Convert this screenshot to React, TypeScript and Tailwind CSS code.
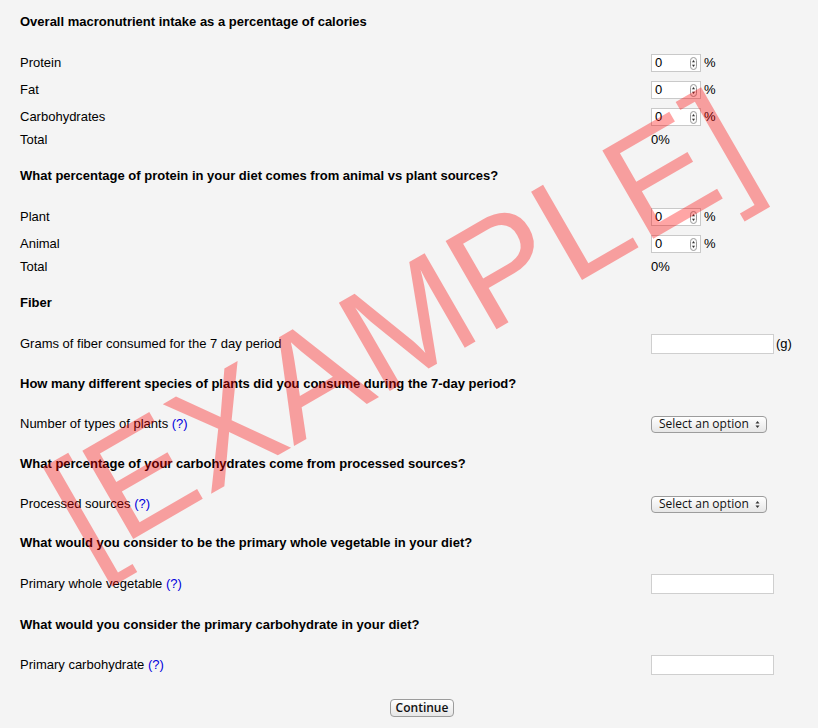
import React from 'react';

function Spinner() {
  return (
    <svg width="7" height="13" viewBox="0 0 7 13" className="mr-[3px]">
      <rect x="0.5" y="0.5" width="6" height="12" rx="3" fill="#fafafa" stroke="#9a9a9a" />
      <path d="M2 5.2 L3.5 3 L5 5.2 Z" fill="#333" />
      <path d="M2 7.8 L3.5 10 L5 7.8 Z" fill="#333" />
    </svg>
  );
}

function NumberBox() {
  return (
    <div className="flex items-center">
      <div className="flex h-[18px] w-[50px] items-center justify-between border border-[#c9c9c9] bg-white pl-[3px]">
        <span>0</span>
        <Spinner />
      </div>
      <span className="ml-[3px]">%</span>
    </div>
  );
}

function TextBox() {
  return <div className="h-[20px] w-[123px] border border-[#cfcfcf] bg-white" />;
}

function SelectBox() {
  return (
    <div className="flex h-[17px] w-[116px] items-center justify-between rounded-[4px] border border-[#9c9c9c] bg-gradient-to-b from-white to-[#e6e6e6] pl-[7px] pr-[6px] font-['Open_Sans',sans-serif] text-[12px] leading-none text-[#111]">
      <span>Select an option</span>
      <svg width="5" height="9" viewBox="0 0 5 9">
        <path d="M0.5 3.5 L2.5 1 L4.5 3.5 Z" fill="#333" />
        <path d="M0.5 5.5 L2.5 8 L4.5 5.5 Z" fill="#333" />
      </svg>
    </div>
  );
}

function Help() {
  return <span className="text-[#0000dd]"> (?)</span>;
}

function Row({ label, children, cls = '' }: { label: React.ReactNode; children?: React.ReactNode; cls?: string }) {
  return (
    <div className={`flex h-[20px] items-center ${cls}`}>
      <div className="w-[631px]">{label}</div>
      <div className="flex items-center">{children}</div>
    </div>
  );
}

function Heading({ text, cls = '' }: { text: string; cls?: string }) {
  return <h2 className={`h-[16px] font-bold leading-[16px] ${cls}`}>{text}</h2>;
}

export default function App() {
  return (
    <div className="relative min-h-[728px] w-full overflow-hidden bg-[#f4f4f4] font-['Liberation_Sans',Arial,sans-serif] text-[13px] text-black">
      <div className="flex flex-col pl-[20px] pt-[14px]">
        <Heading text="Overall macronutrient intake as a percentage of calories" />
        <Row label="Protein" cls="mt-[23px]"><NumberBox /></Row>
        <Row label="Fat" cls="mt-[7px]"><NumberBox /></Row>
        <Row label="Carbohydrates" cls="mt-[7px]"><NumberBox /></Row>
        <Row label="Total" cls="mt-[3px]"><span>0%</span></Row>

        <Heading text="What percentage of protein in your diet comes from animal vs plant sources?" cls="mt-[18px]" />
        <Row label="Plant" cls="mt-[23px]"><NumberBox /></Row>
        <Row label="Animal" cls="mt-[7px]"><NumberBox /></Row>
        <Row label="Total" cls="mt-[3px]"><span>0%</span></Row>

        <Heading text="Fiber" cls="mt-[18px]" />
        <Row label="Grams of fiber consumed for the 7 day period" cls="mt-[23px]">
          <TextBox />
          <span className="ml-[2px]">(g)</span>
        </Row>

        <Heading text="How many different species of plants did you consume during the 7-day period?" cls="mt-[22px]" />
        <Row label={<>Number of types of plants<Help /></>} cls="mt-[22px]"><SelectBox /></Row>

        <Heading text="What percentage of your carbohydrates come from processed sources?" cls="mt-[22px]" />
        <Row label={<>Processed sources<Help /></>} cls="mt-[22px]"><SelectBox /></Row>

        <Heading text="What would you consider to be the primary whole vegetable in your diet?" cls="mt-[21px]" />
        <Row label={<>Primary whole vegetable<Help /></>} cls="mt-[23px]"><TextBox /></Row>

        <Heading text="What would you consider the primary carbohydrate in your diet?" cls="mt-[23px]" />
        <Row label={<>Primary carbohydrate<Help /></>} cls="mt-[22px]"><TextBox /></Row>

        <div className="mt-[24px] flex pl-[370px]">
          <button className="h-[18px] w-[64px] rounded-[4px] border border-[#9c9c9c] bg-gradient-to-b from-white to-[#e6e6e6] font-['Open_Sans',sans-serif] text-[12px] font-semibold leading-none text-[#111]">
            Continue
          </button>
        </div>
      </div>

      {/* watermark */}
      <div className="pointer-events-none absolute left-[400px] top-[326px] -translate-x-1/2 -translate-y-1/2 -rotate-[30deg] whitespace-nowrap font-['Liberation_Sans',Arial,sans-serif] text-[148px] leading-none text-[#ff0000] opacity-[0.35]">
        [EXAMPLE]
      </div>
    </div>
  );
}
